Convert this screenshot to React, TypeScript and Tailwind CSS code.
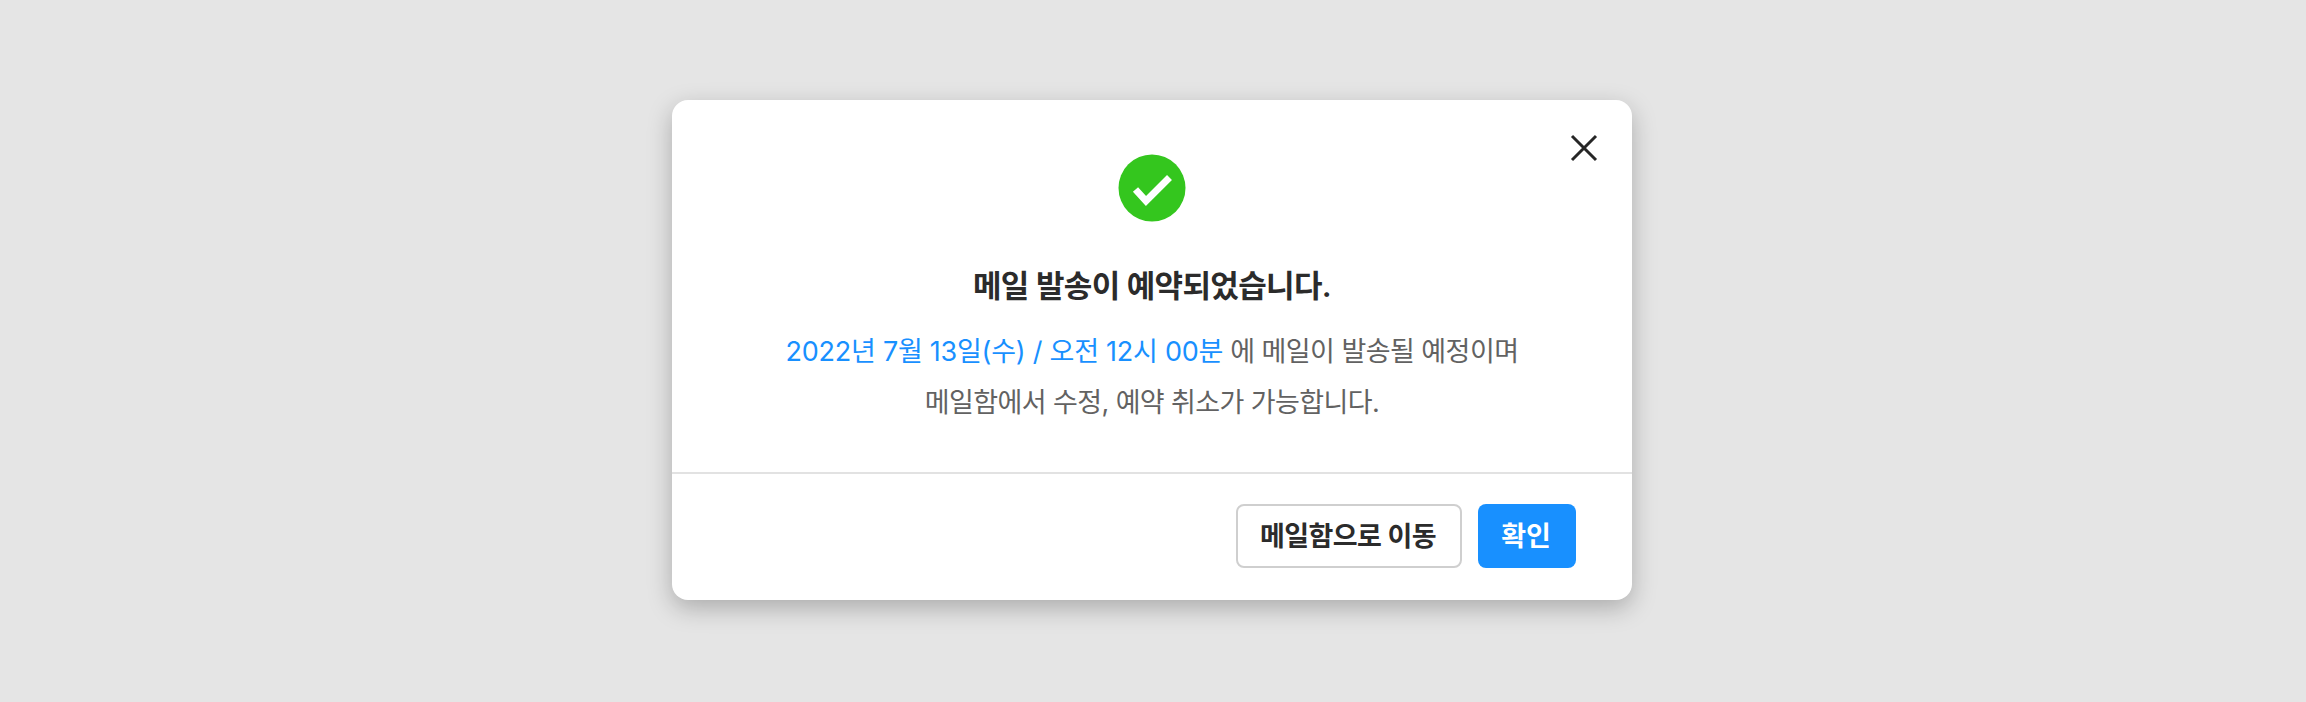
export default function App() {
  return (
    <div className="w-[2306px] h-[702px] bg-[#e5e5e5] flex items-start justify-center pt-[100px] font-['Inter','Noto_Sans_CJK_KR',sans-serif]">
      <div className="relative w-[960px] h-[500px] mr-[2px] bg-white rounded-[16px] shadow-[0_8px_24px_rgba(0,0,0,0.25)] flex flex-col">
        <button className="absolute right-[34px] top-[34px] w-[28px] h-[28px] flex items-center justify-center">
          <svg width="28" height="28" viewBox="0 0 28 28" fill="none" stroke="#262626" strokeWidth="3">
            <path d="M2 2 L26 26 M26 2 L2 26" />
          </svg>
        </button>
        <div className="h-[374px] flex flex-col items-center pt-[54px] border-b-2 border-[#e2e2e2]">
          <svg width="68" height="68" viewBox="0 0 68 68">
            <circle cx="34" cy="34" r="33.5" fill="#34c61e" />
            <path d="M17.5 35.5 L28 47 L51.5 23.5" fill="none" stroke="#fff" strokeWidth="7" />
          </svg>
          <h1 className="mt-[42px] text-[31px] leading-[44px] font-semibold text-[#2b2b2b] tracking-[-0.65px]">메일 발송이 예약되었습니다.</h1>
          <p className="mt-[18px] text-[27px] leading-[51px] text-[#626262] text-center tracking-[-0.55px]">
            <span className="text-[#1890ff] tracking-[-0.25px]">2022년 7월 13일(수) / 오전 12시 00분</span> 에 메일이 발송될 예정이며
            <br />
            <span className="tracking-[-0.6px]">메일함에서 수정, 예약 취소가 가능합니다.</span>
          </p>
        </div>
        <div className="flex justify-end gap-4 pt-[30px] pr-[56px]">
          <button className="w-[226px] h-[64px] pt-[2px] pr-[2px] rounded-[8px] border-2 border-[#cfcfcf] bg-white text-[27px] font-semibold text-[#2b2b2b] tracking-[-0.6px]">메일함으로 이동</button>
          <button className="w-[98px] h-[64px] pt-[2px] pr-[2px] rounded-[8px] bg-[#1890ff] text-[27px] font-semibold text-white">확인</button>
        </div>
      </div>
    </div>
  );
}
